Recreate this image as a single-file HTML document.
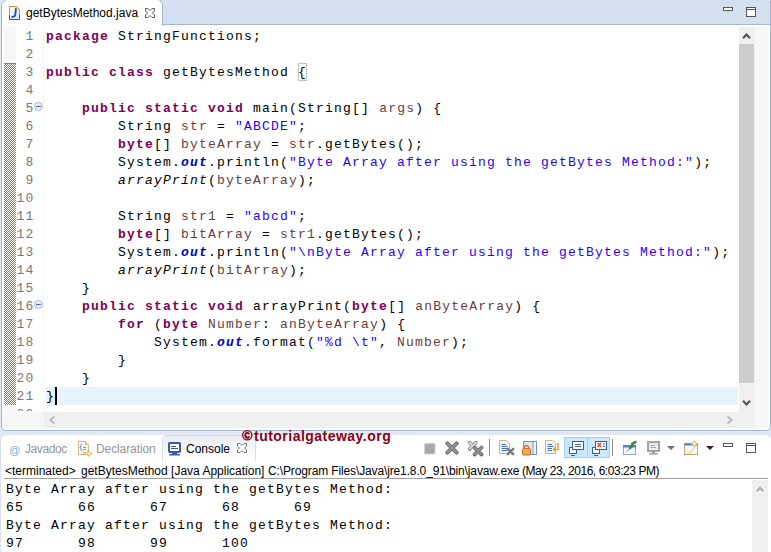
<!DOCTYPE html>
<html><head><meta charset="utf-8">
<style>
*{margin:0;padding:0;box-sizing:border-box}
html,body{width:771px;height:552px;overflow:hidden}
body{position:relative;background:#E1E7F3;font-family:"Liberation Sans",sans-serif}
.a{position:absolute}
svg{position:absolute;overflow:visible}
#frame{left:1px;top:0;width:770px;height:431px;background:#fff;border:1px solid #A9B5C8;border-top:none;border-radius:0 0 5px 5px}
#topbar{left:162px;top:0;width:609px;height:25px;background:#D3E0F0;border-bottom:1px solid #A9B5C8;border-right:1px solid #A9B5C8;border-radius:0 5px 0 0}
#tab{left:1px;top:-1px;width:162px;height:27px;background:#fff;border-right:1px solid #A9B5C8;border-top:1px solid #A9B5C8;border-left:1px solid #A9B5C8;border-radius:4px 6px 0 0}
.tt{font-size:12px;white-space:pre;line-height:15px}
#ruler{left:4px;top:27px;width:12px;height:385px;background:#F6F6F6}
#lnsep{left:43px;top:27px;width:1px;height:385px;background:#F3F3F3}
.mono{font-family:"Liberation Mono",monospace;font-size:13px;letter-spacing:1.2px;line-height:18px;white-space:pre}
#lnums{left:17px;top:28px;width:26px;height:383px;overflow:hidden}
#lnums div{position:absolute;right:8.5px;color:#787878}
#curline{left:46px;top:387px;width:692px;height:18px;background:#E8F2FE}
#code{left:46px;top:28px;color:#000}
.k{color:#7F0055;font-weight:bold}
.s{color:#2A00FF}
.v{color:#6A3E3E}
.f{color:#0000C0;font-style:italic;font-weight:bold}
.i{font-style:italic}
#vscroll{left:739px;top:27px;width:16px;height:401px;background:#F0F0F0}
#thumb{left:739px;top:44px;width:15px;height:339px;background:#CDCDCD}
#ovr{left:755px;top:27px;width:13px;height:401px;background:#F7F7F7}
#hscroll{left:44px;top:412px;width:695px;height:16px;background:#F0F0F0}
#hleft{left:2px;top:412px;width:42px;height:16px;background:#F7F7F7}
#panel{left:0;top:435px;width:771px;height:120px;background:#fff;border-left:1px solid #D9E0F0;border-radius:6px 6px 0 0}
#ctab{left:162px;top:435px;width:94px;height:26px;border:1px solid #D8DDE5;border-bottom:none;border-radius:5px 5px 0 0;background:linear-gradient(#E9EDF3,#F7F8FA 60%,#fff)}
#sep{left:4px;top:478px;width:764px;height:1px;background:#A0A0A0}
#out{left:6px;top:481px;color:#000}
#wm{left:254px;top:428px;font-size:14px;font-weight:bold;letter-spacing:0.48px;color:#8B0012;white-space:pre;line-height:16px}
</style></head><body>
<div id="frame" class="a"></div>
<div id="topbar" class="a"></div>
<div id="tab" class="a"></div>
<svg style="left:0;top:0" width="7" height="6" viewBox="0 0 7 6"><path d="M0 0H5.5L1.5 4V5H0Z" fill="#DDE5F1"/><path d="M5.5 0.2L1.5 4.2" stroke="#A9B5C8" stroke-width="1"/></svg>
<!-- J file icon -->
<svg style="left:9px;top:6px" width="12" height="14" viewBox="0 0 12 14">
<defs><linearGradient id="jg" x1="0" y1="0" x2="1" y2="1"><stop offset="0" stop-color="#F6F9FD"/><stop offset="1" stop-color="#DDE9F5"/></linearGradient></defs>
<path d="M0.5 0.5H7.5L10.5 3.5V13.5H0.5Z" fill="url(#jg)"/>
<path d="M7.5 0.5V3.5H10.5" fill="#F1E3C4" stroke="#E4C690" stroke-width="0.8"/>
<path d="M0.5 9V0.5H7.5L10.5 3.5V9" fill="none" stroke="#C99237"/>
<path d="M0.5 9V13.5H10.5V9" fill="none" stroke="#8E3B2C"/>
<path d="M6.8 3Q6.6 6 6.3 8.5Q6 11 3.2 10.9" fill="none" stroke="#2E4FAE" stroke-width="1.9" stroke-linecap="round"/>
</svg>
<div class="a tt" style="left:26px;top:6px;color:#000">getBytesMethod.java</div>
<svg style="left:145px;top:8px" width="10" height="10" viewBox="0 0 10 10"><path d="M0.5 0.5H3L5 2.5L7 0.5H9.5V3L7.5 5L9.5 7V9.5H7L5 7.5L3 9.5H0.5V7L2.5 5L0.5 3Z" fill="#fff" stroke="#5A5A5A"/></svg>
<svg style="left:723px;top:7px" width="10" height="4" viewBox="0 0 10 4"><rect x="0.5" y="0.5" width="9" height="3" fill="#fff" stroke="#555"/></svg>
<svg style="left:746px;top:7px" width="10" height="10" viewBox="0 0 10 10"><rect x="0.5" y="0.5" width="9" height="9" fill="#fff" stroke="#555"/><line x1="0.5" y1="2.5" x2="9.5" y2="2.5" stroke="#555"/></svg>

<div id="ruler" class="a"></div>
<svg style="left:4px;top:63px" width="12" height="342"><defs><pattern id="chk" width="2" height="2" patternUnits="userSpaceOnUse"><rect width="2" height="2" fill="#FDFBF3"/><rect width="1" height="1" fill="#3590F8"/><rect x="1" y="1" width="1" height="1" fill="#3590F8"/></pattern></defs><rect width="12" height="342" fill="url(#chk)" shape-rendering="crispEdges"/><rect width="12" height="1" fill="#3590F8"/></svg>
<div id="lnsep" class="a"></div>
<div id="lnums" class="a mono">
<div style="top:0">1</div><div style="top:18px">2</div><div style="top:36px">3</div><div style="top:54px">4</div><div style="top:72px">5</div><div style="top:90px">6</div><div style="top:108px">7</div><div style="top:126px">8</div><div style="top:144px">9</div><div style="top:162px">10</div><div style="top:180px">11</div><div style="top:198px">12</div><div style="top:216px">13</div><div style="top:234px">14</div><div style="top:252px">15</div><div style="top:270px">16</div><div style="top:288px">17</div><div style="top:306px">18</div><div style="top:324px">19</div><div style="top:342px">20</div><div style="top:360px">21</div><div style="top:378px">22</div>
</div>
<svg style="left:34px;top:102px" width="9" height="9" viewBox="0 0 9 9"><circle cx="4.5" cy="4.5" r="4" fill="#EAF2FB" stroke="#A9B6CA"/><line x1="2" y1="4.5" x2="7" y2="4.5" stroke="#56689C" stroke-width="1.2"/></svg>
<svg style="left:34px;top:300px" width="9" height="9" viewBox="0 0 9 9"><circle cx="4.5" cy="4.5" r="4" fill="#EAF2FB" stroke="#A9B6CA"/><line x1="2" y1="4.5" x2="7" y2="4.5" stroke="#56689C" stroke-width="1.2"/></svg>
<div id="curline" class="a"></div>
<div class="a" style="left:298px;top:63px;width:9px;height:18px;border:1px solid #C3C3C3"></div>
<div class="a" style="left:55px;top:387px;width:2px;height:18px;background:#000"></div>
<pre id="code" class="a mono"><span class="k">package</span> StringFunctions;

<span class="k">public</span> <span class="k">class</span> getBytesMethod {

    <span class="k">public</span> <span class="k">static</span> <span class="k">void</span> main(String[] <span class="v">args</span>) {
        String <span class="v">str</span> = <span class="s">"ABCDE"</span>;
        <span class="k">byte</span>[] <span class="v">byteArray</span> = <span class="v">str</span>.getBytes();
        System.<span class="f">out</span>.println(<span class="s">"Byte Array after using the getBytes Method:"</span>);
        <span class="i">arrayPrint</span>(<span class="v">byteArray</span>);

        String <span class="v">str1</span> = <span class="s">"abcd"</span>;
        <span class="k">byte</span>[] <span class="v">bitArray</span> = <span class="v">str1</span>.getBytes();
        System.<span class="f">out</span>.println(<span class="s">"\nByte Array after using the getBytes Method:"</span>);
        <span class="i">arrayPrint</span>(<span class="v">bitArray</span>);
    }
    <span class="k">public</span> <span class="k">static</span> <span class="k">void</span> arrayPrint(<span class="k">byte</span>[] <span class="v">anByteArray</span>) {
        <span class="k">for</span> (<span class="k">byte</span> <span class="v">Number</span>: <span class="v">anByteArray</span>) {
            System.<span class="f">out</span>.format(<span class="s">"%d \t"</span>, <span class="v">Number</span>);
        }
    }
}</pre>
<div id="vscroll" class="a"></div>
<div id="thumb" class="a"></div>
<div id="ovr" class="a"></div>
<svg style="left:742px;top:32px" width="9" height="8" viewBox="0 0 9 8"><path d="M1 6.3L4.5 2.5L8 6.3" fill="none" stroke="#4E5757" stroke-width="2.2"/></svg>
<svg style="left:742px;top:399px" width="9" height="8" viewBox="0 0 9 8"><path d="M1 1.7L4.5 5.5L8 1.7" fill="none" stroke="#4E5757" stroke-width="2.2"/></svg>
<div id="hleft" class="a"></div>
<div id="hscroll" class="a"></div>
<svg style="left:49px;top:416px" width="7" height="8" viewBox="0 0 7 8"><path d="M5.5 0.5L1.5 4L5.5 7.5" fill="none" stroke="#BDBDBD" stroke-width="2.2"/></svg>
<svg style="left:726px;top:416px" width="7" height="8" viewBox="0 0 7 8"><path d="M1.5 0.5L5.5 4L1.5 7.5" fill="none" stroke="#BDBDBD" stroke-width="2.2"/></svg>

<div id="panel" class="a"></div>
<div id="ctab" class="a"></div>
<svg style="left:242px;top:430px" width="11" height="11" viewBox="0 0 11 11"><circle cx="5.3" cy="5.3" r="4.6" fill="none" stroke="#8B0012" stroke-width="1.3"/><path d="M7.2 4.2Q6.8 2.9 5.4 2.9Q3.3 2.9 3.3 5.3Q3.3 7.7 5.4 7.7Q6.8 7.7 7.2 6.4" fill="none" stroke="#8B0012" stroke-width="1.9"/></svg>
<div id="wm" class="a">tutorialgateway.org</div>
<!-- Javadoc @ -->
<div class="a" style="left:9px;top:443px;font-size:11px;color:#8CAAD2;line-height:15px;font-style:italic">@</div>
<div class="a tt" style="left:25px;top:442px;color:#969696;letter-spacing:-0.4px">Javadoc</div>
<svg style="left:78px;top:441px" width="15" height="17" viewBox="0 0 15 17"><path d="M0.5 0.5H7.5L10.5 3.5V13.5H0.5Z" fill="#F7F8FB" stroke="#D6B887"/><path d="M7.5 0.5V3.5H10.5" fill="#F3E2C2" stroke="#D6B887"/><path d="M4.3 3Q3 3 3 4.3V5.5L2 6.5L3 7.5V8.7Q3 10 4.3 10" fill="none" stroke="#7FA0CC" stroke-width="1.1"/><path d="M5 6.5H8M5 8.5H8" stroke="#8597B8"/><path d="M5.5 11.5H10V9.5L14 12.5L10 15.5V13.5H5.5Z" fill="#F6EFB8" stroke="#D8B470"/></svg>
<div class="a tt" style="left:96px;top:442px;color:#969696;letter-spacing:-0.1px">Declaration</div>
<svg style="left:168px;top:442px" width="13" height="14" viewBox="0 0 13 14"><rect x="1" y="1" width="11" height="9" rx="0.8" fill="#fff" stroke="#3A56AE" stroke-width="2"/><path d="M3 4.5H8M3 6.5H10" stroke="#3F4F9E"/><rect x="4" y="10" width="5" height="2" fill="#3A56AE"/><rect x="1" y="12" width="11" height="1.6" rx="0.8" fill="#3A56AE"/></svg>
<div class="a tt" style="left:186px;top:442px;color:#000">Console</div>
<svg style="left:237px;top:443px" width="10" height="10" viewBox="0 0 10 10"><path d="M0.5 0.5H3L5 2.5L7 0.5H9.5V3L7.5 5L9.5 7V9.5H7L5 7.5L3 9.5H0.5V7L2.5 5L0.5 3Z" fill="#fff" stroke="#757575"/></svg>

<!-- toolbar -->
<svg style="left:424px;top:443px" width="12" height="12" viewBox="0 0 12 12"><rect x="0.5" y="0.5" width="10.5" height="10.5" rx="1.5" fill="#A8AAA8" stroke="#CFCFCF"/><path d="M1.5 1.2H10" stroke="#A9B8D0" stroke-width="0.8"/></svg>
<svg style="left:445px;top:441px" width="14" height="14" viewBox="0 0 14 14"><path d="M2.3 2.3L11.7 11.7M11.7 2.3L2.3 11.7" stroke="#6A6E6A" stroke-width="4" stroke-linecap="round"/><path d="M2.3 2.3L11.7 11.7M11.7 2.3L2.3 11.7" stroke="#8E938E" stroke-width="2" stroke-linecap="round"/></svg>
<svg style="left:467px;top:440px" width="17" height="17" viewBox="0 0 17 17"><path d="M2.5 2.5L9 9M9 2.5L2.5 9" stroke="#8E8E8E" stroke-width="3.4" stroke-linecap="round"/><path d="M2.5 2.5L9 9M9 2.5L2.5 9" stroke="#E2E4E2" stroke-width="1.6" stroke-linecap="round"/><path d="M7.5 7.5L14.5 14.5M14.5 7.5L7.5 14.5" stroke="#6A6E6A" stroke-width="3.8" stroke-linecap="round"/><path d="M7.5 7.5L14.5 14.5M14.5 7.5L7.5 14.5" stroke="#8E938E" stroke-width="1.8" stroke-linecap="round"/><path d="M2 9.5Q2.5 10.5 3.5 10.3M7 15Q7.5 16 8.5 15.8M14 15.8Q15 16 15.3 15" fill="none" stroke="#9A2A2A" stroke-width="0.9"/></svg>
<div class="a" style="left:489px;top:439px;width:1px;height:17px;background:#8C8C8C"></div>
<svg style="left:499px;top:440px" width="16" height="16" viewBox="0 0 16 16"><path d="M0.5 0.5H7.5L10.5 3.5V13.5H0.5Z" fill="#F3F5F9" stroke="#C9B48E"/><path d="M2.5 4.5H7M2.5 6.5H8.5M2.5 8.5H8.5M2.5 10.5H8.5" stroke="#4A76C0"/><path d="M8.8 8.8L14.2 14.2M14.2 8.8L8.8 14.2" stroke="#7A7E7A" stroke-width="2.6" stroke-linecap="round"/></svg>
<svg style="left:522px;top:441px" width="16" height="15" viewBox="0 0 16 15"><rect x="1.5" y="0.5" width="13" height="13" fill="#DDEBF9" stroke="#7C8FB4"/><rect x="11" y="0.5" width="3.5" height="13" fill="#F4F8FC" stroke="#7C8FB4"/><rect x="0.5" y="7.5" width="8" height="6.5" rx="1" fill="#F2A850" stroke="#C8712A"/><path d="M2.5 7.5V5.5Q4.5 3.5 6.5 5.5V7.5" fill="none" stroke="#C8712A" stroke-width="1.2"/></svg>
<svg style="left:545px;top:440px" width="16" height="16" viewBox="0 0 16 16"><path d="M0.5 0.5H7.5L10.5 3.5V13.5H0.5Z" fill="#F3F5F9" stroke="#C9B48E"/><path d="M2.5 4.5H7M2.5 6.5H8.5M2.5 8.5H7M2.5 10.5H7" stroke="#4A76C0"/><path d="M13 3V9.5H9M10.5 7.5L8.5 9.5L10.5 11.5" fill="none" stroke="#EFA33E" stroke-width="1.6"/></svg>
<div class="a" style="left:564px;top:437px;width:46px;height:21px;background:#CCE8FF;border:1px solid #99D1FF"></div>
<div class="a" style="left:587px;top:437px;width:1px;height:21px;background:#99D1FF"></div>
<svg style="left:569px;top:441px" width="16" height="15" viewBox="0 0 16 15"><rect x="0.5" y="6.5" width="7" height="6" fill="#fff" stroke="#2F5FA8"/><path d="M2 14.5H6" stroke="#2F5FA8"/><rect x="3.5" y="0.5" width="11" height="8" fill="#fff" stroke="#2F5FA8"/><path d="M6 3.5H12M6 5.5H12" stroke="#5060A0"/></svg>
<svg style="left:592px;top:441px" width="16" height="15" viewBox="0 0 16 15"><rect x="0.5" y="6.5" width="7" height="6" fill="#fff" stroke="#2F5FA8"/><path d="M2 14.5H6" stroke="#2F5FA8"/><rect x="3.5" y="0.5" width="11" height="8" fill="#fff" stroke="#2F5FA8"/><path d="M5.5 2L9 6M9 2L5.5 6" stroke="#E5533A" stroke-width="1.6"/><path d="M11 3H13M11 5.5H13" stroke="#5060A0"/></svg>
<div class="a" style="left:612px;top:439px;width:1px;height:17px;background:#8C8C8C"></div>
<svg style="left:622px;top:440px" width="16" height="16" viewBox="0 0 16 16"><rect x="1.5" y="5.5" width="12" height="9" fill="#F2F6FB" stroke="#97A5B8"/><rect x="1" y="5" width="13" height="2.5" fill="#3F86D9"/><path d="M4.5 11.5L8 8.5" stroke="#7A8596" stroke-width="0.9"/><path d="M8 8L10.5 5.5M10 4L13.5 2" stroke="#3E8A4C" stroke-width="2.6" stroke-linecap="round"/></svg>
<svg style="left:647px;top:441px" width="14" height="14" viewBox="0 0 14 14"><rect x="1" y="1" width="11" height="9" fill="#EDEDED" stroke="#A3A3A3" stroke-width="2"/><path d="M3.5 4.5H8M3.5 6.5H9" stroke="#A8A8A8"/><rect x="5" y="10" width="3" height="2" fill="#A3A3A3"/><rect x="2" y="12" width="9" height="1.5" fill="#A3A3A3"/></svg>
<svg style="left:667px;top:446px" width="8" height="4" viewBox="0 0 8 4"><path d="M0 0H8L4 4Z" fill="#6F6F6F"/></svg>
<svg style="left:683px;top:440px" width="16" height="16" viewBox="0 0 16 16"><rect x="1.5" y="3.5" width="13" height="11" fill="#F4F8FD" stroke="#C8A56A"/><rect x="1.5" y="3.5" width="13" height="2" fill="#3F86D9"/><path d="M3 13.5Q10 12.5 12 6" fill="none" stroke="#F3E39A" stroke-width="1.6"/><path d="M11.5 0.5L12.8 3L15.2 3.8L12.8 4.8L11.5 7.2L10.2 4.8L7.8 3.8L10.2 3Z" fill="#FBF3D0" stroke="#D9A750" stroke-width="0.8"/></svg>
<svg style="left:706px;top:446px" width="8" height="4" viewBox="0 0 8 4"><path d="M0 0H8L4 4Z" fill="#4A1A1A"/></svg>
<svg style="left:723px;top:443px" width="10" height="4" viewBox="0 0 10 4"><rect x="0.5" y="0.5" width="9" height="3" fill="#fff" stroke="#555"/></svg>
<svg style="left:746px;top:443px" width="10" height="10" viewBox="0 0 10 10"><rect x="0.5" y="0.5" width="9" height="9" fill="#fff" stroke="#555"/><line x1="0.5" y1="2.5" x2="9.5" y2="2.5" stroke="#555"/></svg>

<div class="a tt" style="left:5px;top:464px;color:#000">&lt;terminated&gt;</div>
<div class="a tt" style="left:81px;top:464px;color:#000">getBytesMethod [Java Application]</div>
<div class="a tt" style="left:268px;top:464px;color:#000;letter-spacing:-0.13px">C:\Program Files\Java\jre1.8.0_91\bin\javaw.exe</div>
<div class="a tt" style="left:522px;top:464px;color:#000;letter-spacing:-0.45px">(May 23, 2016, 6:03:23 PM)</div>
<div id="sep" class="a"></div>
<pre id="out" class="a mono">Byte Array after using the getBytes Method:
65      66      67      68      69      
Byte Array after using the getBytes Method:
97      98      99      100     </pre>
<div class="a" style="left:752px;top:480px;width:16px;height:72px;background:#F0F0F0"></div>
<svg style="left:756px;top:486px" width="8" height="6" viewBox="0 0 8 6"><path d="M0.8 5.4L4 1.8L7.2 5.4" fill="none" stroke="#ABABAB" stroke-width="2"/></svg>
</body></html>
